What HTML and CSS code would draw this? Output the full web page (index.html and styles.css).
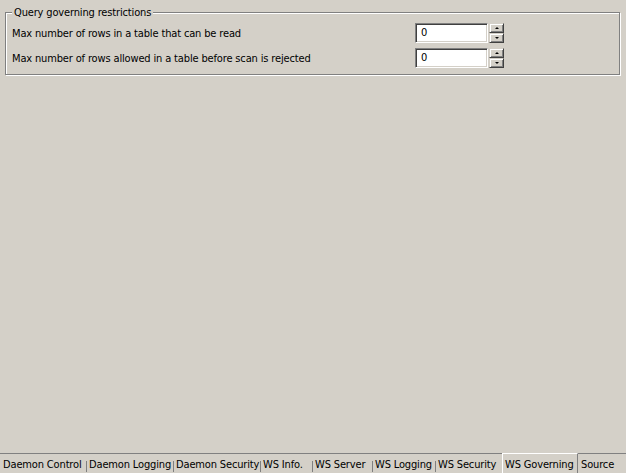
FILE: index.html
```html
<!DOCTYPE html>
<html>
<head>
<meta charset="utf-8">
<link rel="stylesheet" href="styles.css">
</head>
<body>
<div class="page">
  <div class="content">
    <div class="group">
      <div class="group-title">Query governing restrictions</div>
      <div class="row">
        <div class="label">Max number of rows in a table that can be read</div>
        <div class="spin">
          <div class="field">0</div>
          <div class="buttons">
            <div class="btn"><span class="arrow-up"></span></div>
            <div class="btn"><span class="arrow-down"></span></div>
          </div>
        </div>
      </div>
      <div class="row">
        <div class="label">Max number of rows allowed in a table before scan is rejected</div>
        <div class="spin">
          <div class="field">0</div>
          <div class="buttons">
            <div class="btn"><span class="arrow-up"></span></div>
            <div class="btn"><span class="arrow-down"></span></div>
          </div>
        </div>
      </div>
    </div>
  </div>
  <div class="tabs">
    <div class="tab first"><span class="label-t">Daemon Control</span></div>
    <div class="tab"><span class="sep"></span><span class="label-t">Daemon Logging</span></div>
    <div class="tab"><span class="sep"></span><span class="label-t">Daemon Security</span></div>
    <div class="tab"><span class="sep"></span><span class="label-t">WS Info.</span></div>
    <div class="tab"><span class="sep"></span><span class="label-t">WS Server</span></div>
    <div class="tab"><span class="sep"></span><span class="label-t">WS Logging</span></div>
    <div class="tab"><span class="sep"></span><span class="label-t">WS Security</span></div>
    <div class="tab active"><span class="label-t">WS Governing</span></div>
    <div class="tab"><span class="label-t">Source</span></div>
  </div>
</div>
</body>
</html>
```
FILE: styles.css
```css
html, body {
  margin: 0;
  padding: 0;
  background: #d4d0c8;
}
body {
  font-family: "DejaVu Sans Condensed", "DejaVu Sans", sans-serif;
  font-stretch: condensed;
  font-size: 11px;
  letter-spacing: -0.15px;
  color: #000;
}
.page {
  display: flex;
  flex-direction: column;
  width: 626px;
  height: 473px;
  overflow: hidden;
}
.content {
  flex: 1;
}
.group {
  position: relative;
  box-sizing: border-box;
  margin: 12px 0 0 5px;
  width: 615px;
  height: 63px;
  border: 1px solid #808080;
  box-shadow: inset 1px 1px #fff, 1px 1px #fff;
  padding: 10px 0 0 6px;
  display: flex;
  flex-direction: column;
  gap: 5px;
}
.group-title {
  position: absolute;
  top: -7px;
  left: 6px;
  padding: 0 2px;
  line-height: 13px;
  background: #d4d0c8;
}
.row {
  display: grid;
  grid-template-columns: 403px auto;
  align-items: center;
  height: 20px;
}
.label {
  line-height: 13px;
  white-space: nowrap;
}
.spin {
  display: flex;
  gap: 1px;
}
.field {
  box-sizing: border-box;
  width: 73px;
  height: 20px;
  background: #fff;
  border: 1px solid;
  border-color: #808080 #fff #fff #808080;
  box-shadow: inset 1px 1px #404040, inset -1px -1px #d4d0c8;
  padding: 0 0 0 5px;
  line-height: 18px;
}
.buttons {
  display: flex;
  flex-direction: column;
}
.btn {
  box-sizing: border-box;
  width: 15px;
  height: 10px;
  background: #d4d0c8;
  border: 1px solid;
  border-color: #d4d0c8 #404040 #404040 #d4d0c8;
  box-shadow: inset 1px 1px #fff, inset -1px -1px #808080;
  display: flex;
  align-items: center;
  justify-content: center;
}
.arrow-up, .arrow-down {
  width: 0;
  height: 0;
  border-left: 2px solid transparent;
  border-right: 2px solid transparent;
}
.arrow-up {
  border-bottom: 2px solid #000;
}
.arrow-down {
  border-top: 2px solid #000;
}
.tabs {
  display: grid;
  grid-template-columns: 86px 87px 87px 52px 60px 63px 67px 76px 1fr;
  height: 20px;
  box-sizing: border-box;
  border-top: 1px solid #808080;
}
.tab {
  display: flex;
  align-items: flex-end;
  white-space: nowrap;
}
.tab.first {
  padding-left: 3px;
}
.sep {
  flex: none;
  width: 1px;
  height: 11px;
  background: #808080;
  margin-right: 2px;
  margin-bottom: 1px;
}
.label-t {
  line-height: 17px;
}
.tab.active {
  margin-top: -1px;
  border-top: 1px solid #fff;
  border-left: 1px solid #fff;
  border-right: 1px solid #808080;
  padding-left: 2px;
}
.tab.active + .tab {
  padding-left: 3px;
}
```
